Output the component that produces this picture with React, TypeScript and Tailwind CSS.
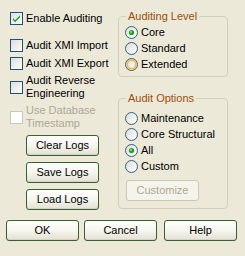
import React, { useId } from 'react';

const FONT = { fontFamily: 'Tahoma, "Liberation Sans", Arial, sans-serif' };

function CheckBox({ checked = false, disabled = false }: { checked?: boolean; disabled?: boolean }) {
  const id = useId();
  return (
    <svg width="13" height="13" viewBox="0 0 13 13" className="shrink-0">
      <defs>
        <linearGradient id={id} x1="0" y1="0" x2="1" y2="1">
          <stop offset="0" stopColor={disabled ? '#FFFFFF' : '#DCDCD7'} />
          <stop offset="1" stopColor="#FFFFFF" />
        </linearGradient>
      </defs>
      <rect x="0.5" y="0.5" width="12" height="12" fill={`url(#${id})`} stroke={disabled ? '#CAC8BB' : '#1C5180'} />
      {checked && (
        <path d="M3 6 L5 8.2 L10 3.2 L10 5.2 L5 10.2 L3 8 Z" fill="#21A121" />
      )}
    </svg>
  );
}

function Radio({ checked = false, hover = false }: { checked?: boolean; hover?: boolean }) {
  const id = useId();
  return (
    <svg width="13" height="13" viewBox="0 0 13 13" className="shrink-0">
      <defs>
        <linearGradient id={id} x1="0" y1="0" x2="1" y2="1">
          <stop offset="0" stopColor="#DCDCD7" />
          <stop offset="1" stopColor="#FFFFFF" />
        </linearGradient>
      </defs>
      <circle cx="6.5" cy="6.5" r="6" fill={`url(#${id})`} stroke="#2C628B" />
      {hover && <circle cx="6.5" cy="6.5" r="4.3" fill="none" stroke="#F8B94A" strokeWidth="1.8" />}
      {checked && (
        <>
          <circle cx="6.5" cy="6.5" r="2.6" fill="#21A121" />
          <circle cx="6" cy="6" r="1" fill="#8FE08F" />
        </>
      )}
    </svg>
  );
}

function Check({ label, checked, disabled, className = '' }: { label: React.ReactNode; checked?: boolean; disabled?: boolean; className?: string }) {
  return (
    <div className={`flex items-center gap-[3px] ${className}`}>
      <CheckBox checked={checked} disabled={disabled} />
      <span className={`leading-[13px] ${disabled ? 'text-[#ACA899]' : 'text-black'}`}>{label}</span>
    </div>
  );
}

function RadioRow({ label, checked, hover }: { label: string; checked?: boolean; hover?: boolean }) {
  return (
    <div className="flex items-center gap-[3px] h-[16px]">
      <Radio checked={checked} hover={hover} />
      <span className="leading-[13px]">{label}</span>
    </div>
  );
}

function XpButton({ children, className = '', disabled = false }: { children: React.ReactNode; className?: string; disabled?: boolean }) {
  return (
    <button
      disabled={disabled}
      className={`h-[21px] flex items-center justify-center rounded-[3px] border leading-[13px] ${
        disabled
          ? 'border-[#C9C7BA] bg-[#F5F4EA] text-[#ACA899]'
          : 'border-[#37612D] bg-linear-to-b from-[#FFFFFF] via-[#F6F5EE] to-[#E3E1D3] text-black shadow-[inset_0_-1px_0_#D6D0C5]'
      } ${className}`}
    >
      {children}
    </button>
  );
}

function GroupBox({ title, children, className = '' }: { title: string; children: React.ReactNode; className?: string }) {
  return (
    <fieldset className={`border border-[#D0D0BF] rounded-[4px] px-[6px] ${className}`}>
      <legend className="px-[2px] ml-[1px] leading-[13px] text-[#9C4E09]">{title}</legend>
      {children}
    </fieldset>
  );
}

export default function App() {
  return (
    <div className="w-[245px] h-[256px] bg-[#ECE9D8] text-[11px] text-black overflow-hidden" style={FONT}>
      <div className="flex">
        {/* left column */}
        <div className="flex flex-col ml-[10px] w-[104px]">
          <Check label="Enable Auditing" checked className="mt-[11px] h-[15px]" />
          <Check label="Audit XMI Import" className="mt-[12px] h-[15px]" />
          <Check label="Audit XMI Export" className="mt-[3px] h-[15px]" />
          <Check label={<>Audit Reverse<br />Engineering</>} className="mt-[3px]" />
          <Check label={<>Use Database<br />Timestamp</>} disabled className="mt-[4px]" />
          <div className="flex flex-col gap-[6px] ml-[16px] mt-[5px]">
            <XpButton className="w-[73px]">Clear Logs</XpButton>
            <XpButton className="w-[73px]">Save Logs</XpButton>
            <XpButton className="w-[73px]">Load Logs</XpButton>
          </div>
        </div>

        {/* right column */}
        <div className="flex flex-col ml-[4px] w-[110px]">
          <GroupBox title="Auditing Level" className="mt-[10px] pb-[4px]">
            <div className="pt-[1px]">
              <RadioRow label="Core" checked />
              <RadioRow label="Standard" />
              <RadioRow label="Extended" hover />
            </div>
          </GroupBox>
          <GroupBox title="Audit Options" className="mt-[15px] pb-[7px]">
            <div className="pt-[5px]">
              <RadioRow label="Maintenance" />
              <RadioRow label="Core Structural" />
              <RadioRow label="All" checked />
              <RadioRow label="Custom" />
            </div>
            <XpButton disabled className="w-[73px] mt-[6px] ml-[1px]">Customize</XpButton>
          </GroupBox>
        </div>
      </div>

      {/* bottom buttons */}
      <div className="flex mt-[10px] ml-[6px]">
        <XpButton className="w-[73px]">OK</XpButton>
        <XpButton className="w-[73px] ml-[5px]">Cancel</XpButton>
        <XpButton className="w-[73px] ml-[7px]">Help</XpButton>
      </div>
    </div>
  );
}
